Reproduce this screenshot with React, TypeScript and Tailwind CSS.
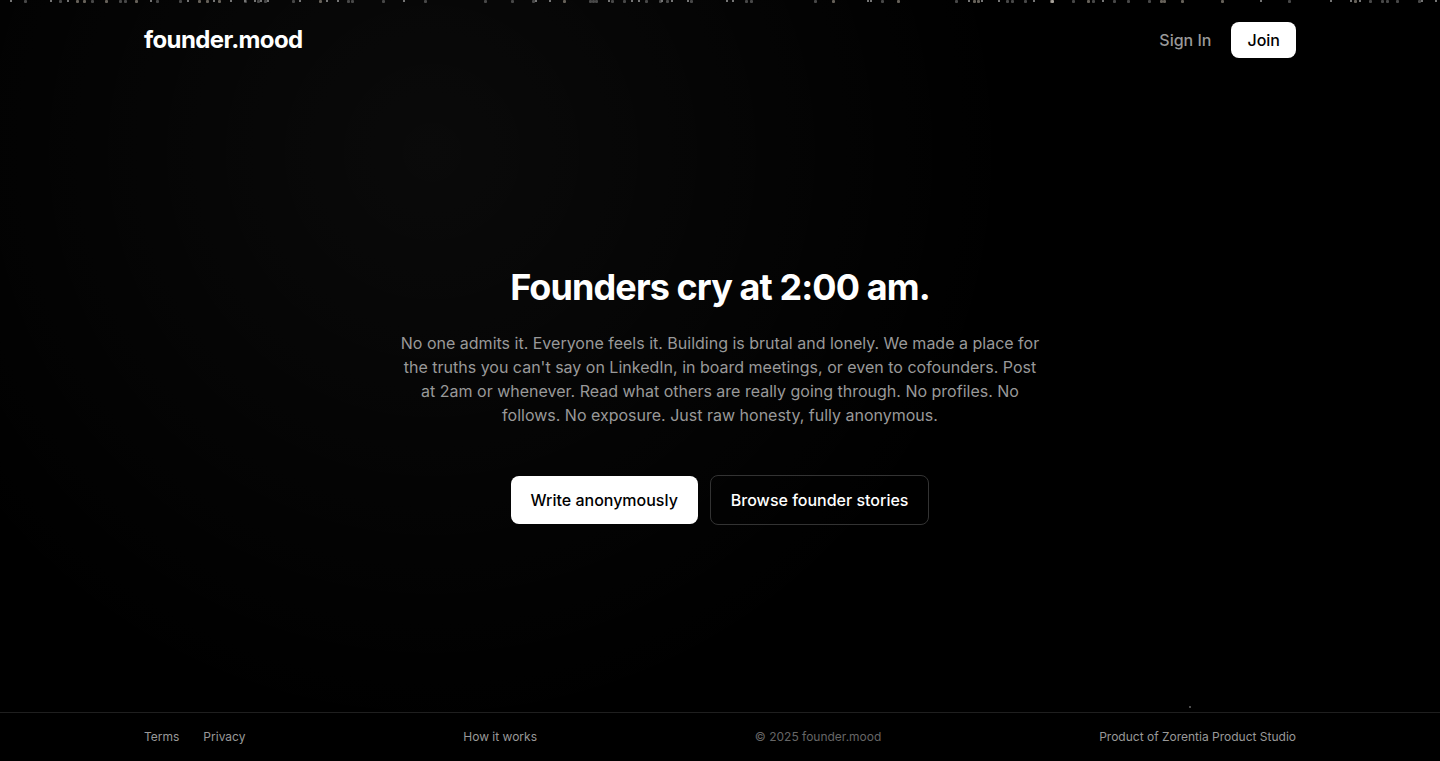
import React from 'react';

type Tone = 'bright' | 'dim' | 'warm';

const DOT_FILL: Record<Tone, string> = {
  bright: '#757575',
  dim: '#484848',
  warm: '#666159',
};

const DOTS: Record<Tone, number[]> = {
  bright: [
    11, 51, 68, 151, 188, 214, 231, 245, 255, 261, 268, 300, 327, 338, 404, 536, 550, 609, 632, 639,
    662, 672, 688, 727, 733, 868, 871, 969, 982, 999, 1034, 1103, 1261, 1331, 1351, 1360, 1422, 1436,
  ],
  dim: [
    26, 61, 93, 121, 126, 158, 181, 246, 259, 266, 294, 349, 353, 384, 426, 486, 513, 534, 591, 594,
    597, 613, 625, 647, 661, 668, 692, 747, 752, 816, 883, 957, 1008, 1013, 1026, 1074, 1094, 1115,
    1129, 1150, 1290, 1371, 1383, 1388, 1398, 1420,
  ],
  warm: [78, 85, 107, 137, 200, 208, 220, 321, 565, 834, 899, 975, 979, 1052, 1089, 1162, 1165, 1183, 1223, 1356],
};

// Ash particles, most of them waiting along the top edge
const Particles: React.FC = () => (
  <div aria-hidden="true" className="absolute inset-0 overflow-hidden pointer-events-none">
    <svg className="absolute inset-0 w-full h-full">
      {DOTS.dim.map((x) => (
        <rect key={x} x={x - 2} y="0" width="3" height="3" rx="1" fill={DOT_FILL.dim} />
      ))}
      {DOTS.warm.map((x) => (
        <rect key={x} x={x - 2} y="0" width="3" height="3" rx="1" fill={DOT_FILL.warm} />
      ))}
      {DOTS.bright.map((x) => (
        <rect key={x} x={x - 1} y="0" width="2" height="2" fill={DOT_FILL.bright} />
      ))}
      <rect x="1051" y="0" width="3" height="3" rx="1" fill="#a8a29a" />
      <rect x="1189" y="706" width="2" height="2" fill="#4d4d4d" />
    </svg>
  </div>
);

const Header: React.FC = () => (
  <header className="relative">
    <div className="max-w-6xl mx-auto h-20 flex items-center justify-between">
      <a href="#" className="text-2xl font-bold tracking-tight">founder.mood</a>
      <nav className="flex items-center gap-5 font-medium">
        <a href="#signin" className="text-[#999999] hover:text-white transition-colors">Sign In</a>
        <button className="bg-white text-black px-4 py-1.5 rounded-lg">Join</button>
      </nav>
    </div>
  </header>
);

const Hero: React.FC = () => (
  <main className="relative flex-1 flex flex-col items-center justify-center text-center">
    <h1 className="text-4xl font-bold tracking-tight mb-6">Founders cry at 2:00 am.</h1>
    <p className="max-w-[640px] text-base text-[#999999] mb-12">
      No one admits it. Everyone feels it. Building is brutal and lonely. We made a place for the
      truths you can't say on LinkedIn, in board meetings, or even to cofounders. Post at 2am or
      whenever. Read what others are really going through. No profiles. No follows. No exposure.
      Just raw honesty, fully anonymous.
    </p>
    <div className="flex flex-wrap items-center justify-center gap-3 font-medium">
      <button className="bg-white text-black px-5 py-3 rounded-lg">Write anonymously</button>
      <button className="border border-[#333333] px-5 py-3 rounded-lg">Browse founder stories</button>
    </div>
  </main>
);

const Footer: React.FC = () => (
  <footer className="relative border-t border-[#1f1f1f] bg-black text-xs text-[#999999]">
    <div className="max-w-6xl mx-auto py-4 flex items-center justify-between">
      <div className="flex gap-6">
        <a href="#terms">Terms</a>
        <a href="#privacy">Privacy</a>
      </div>
      <a href="#how">How it works</a>
      <span className="text-[#666666]">© 2025 founder.mood</span>
      <a href="#studio">Product of Zorentia Product Studio</a>
    </div>
  </footer>
);

export default function App() {
  return (
    <div className="relative min-h-screen flex flex-col bg-black text-white antialiased font-['Inter',sans-serif] bg-[radial-gradient(circle_at_30%_20%,rgba(255,255,255,0.04),transparent_50%)]">
      <Particles />
      <Header />
      <Hero />
      <Footer />
    </div>
  );
}
